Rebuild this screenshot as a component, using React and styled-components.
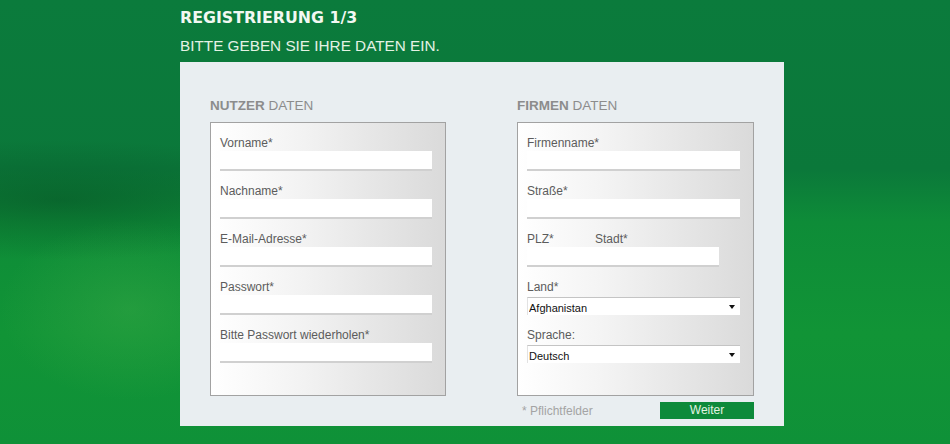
import React from "react";
import styled, { createGlobalStyle } from "styled-components";

const GlobalStyle = createGlobalStyle`
  * {
    box-sizing: border-box;
    margin: 0;
    padding: 0;
  }
  body {
    font-family: "Liberation Sans", Arial, sans-serif;
  }
`;

const Page = styled.div`
  min-height: 100vh;
  padding: 8px 0 0 180px;
  background:
    radial-gradient(ellipse 130px 90px at 130px 310px, rgba(70, 175, 75, 0.35), transparent),
    radial-gradient(ellipse 280px 60px at 60px 200px, rgba(6, 80, 36, 0.55), transparent),
    linear-gradient(180deg, #0b7b3c 0%, #0b783a 38%, #0e8c38 50%, #119436 75%, #0f9138 100%);
`;

const Wrapper = styled.div`
  width: 604px;
`;

const Title = styled.h1`
  font-family: "DejaVu Sans", Verdana, sans-serif;
  font-size: 15.8px;
  font-weight: bold;
  line-height: 20px;
  color: #f2f8f2;
`;

const Subtitle = styled.h2`
  font-family: "Liberation Sans", Arial, sans-serif;
  font-size: 15.3px;
  font-weight: normal;
  line-height: 20px;
  margin: 8px 0 6px;
  color: #e4f2e4;
`;

const Panel = styled.div`
  height: 364px;
  background: #e9eef1;
  padding: 36px 30px 0;
  display: grid;
  grid-template-columns: 236px 237px;
  column-gap: 71px;
`;

const Column = styled.div`
  display: flex;
  flex-direction: column;
`;

const Heading = styled.h3`
  font-size: 13.5px;
  line-height: 16px;
  font-weight: normal;
  color: #8c8c8c;
  margin-bottom: 8px;
  b {
    font-weight: bold;
  }
`;

const Box = styled.div`
  height: 274px;
  border: 1px solid #a2a2a2;
  background: linear-gradient(90deg, #ffffff 0%, #f4f4f4 35%, #dadada 100%);
  padding: 13px 13px 0 9px;
  display: flex;
  flex-direction: column;
  gap: 13px;
`;

const Field = styled.div`
  display: flex;
  flex-direction: column;
`;

const Label = styled.label`
  font-size: 12px;
  line-height: 14px;
  color: #5c5c5c;
  margin-bottom: ${(p) => (p.$select ? "3px" : "1px")};
`;

const Input = styled.input`
  display: block;
  width: 100%;
  height: 20px;
  border: none;
  border-bottom: 2px solid #d0d0d0;
  background: #fff;
  outline: none;
`;

const SplitRow = styled.div`
  display: grid;
  grid-template-columns: 68px 124px;
`;

const SelectWrap = styled.div`
  position: relative;
  height: 18px;
  background: #fff;
  border-top: 1px solid #c4c4c4;
  border-left: 1px solid #e2e2e2;
`;

const Select = styled.select`
  appearance: none;
  width: 100%;
  height: 17px;
  border: none;
  background: transparent;
  font-family: "Liberation Sans", Arial, sans-serif;
  font-size: 11px;
  color: #111;
  padding-left: 1px;
  outline: none;
`;

const Arrow = styled.span`
  position: absolute;
  right: 5px;
  top: 7px;
  border-left: 3.5px solid transparent;
  border-right: 3.5px solid transparent;
  border-top: 4px solid #111;
  pointer-events: none;
`;

const Footer = styled.div`
  display: flex;
  justify-content: space-between;
  align-items: center;
  margin-top: 6px;
  padding-left: 5px;
`;

const Note = styled.span`
  font-size: 12px;
  color: #a4a4a4;
`;

const Button = styled.button`
  width: 94px;
  height: 17px;
  border: none;
  background: #0d8a3a;
  color: #e2f4e2;
  font-family: "Liberation Sans", Arial, sans-serif;
  font-size: 12px;
  line-height: 17px;
`;

const TextField = ({ label }) => (
  <Field>
    <Label>{label}</Label>
    <Input type="text" />
  </Field>
);

const SelectField = ({ label, value }) => (
  <Field>
    <Label $select>{label}</Label>
    <SelectWrap>
      <Select defaultValue={value}>
        <option>{value}</option>
      </Select>
      <Arrow />
    </SelectWrap>
  </Field>
);

export default function App() {
  return (
    <Page>
      <GlobalStyle />
      <Wrapper>
        <Title>REGISTRIERUNG 1/3</Title>
        <Subtitle>BITTE GEBEN SIE IHRE DATEN EIN.</Subtitle>
        <Panel>
          <Column>
            <Heading>
              <b>NUTZER</b> DATEN
            </Heading>
            <Box>
              <TextField label="Vorname*" />
              <TextField label="Nachname*" />
              <TextField label="E-Mail-Adresse*" />
              <TextField label="Passwort*" />
              <TextField label="Bitte Passwort wiederholen*" />
            </Box>
          </Column>
          <Column>
            <Heading>
              <b>FIRMEN</b> DATEN
            </Heading>
            <Box>
              <TextField label="Firmenname*" />
              <TextField label="Straße*" />
              <SplitRow>
                <TextField label="PLZ*" />
                <TextField label="Stadt*" />
              </SplitRow>
              <SelectField label="Land*" value="Afghanistan" />
              <SelectField label="Sprache:" value="Deutsch" />
            </Box>
            <Footer>
              <Note>* Pflichtfelder</Note>
              <Button>Weiter</Button>
            </Footer>
          </Column>
        </Panel>
      </Wrapper>
    </Page>
  );
}
